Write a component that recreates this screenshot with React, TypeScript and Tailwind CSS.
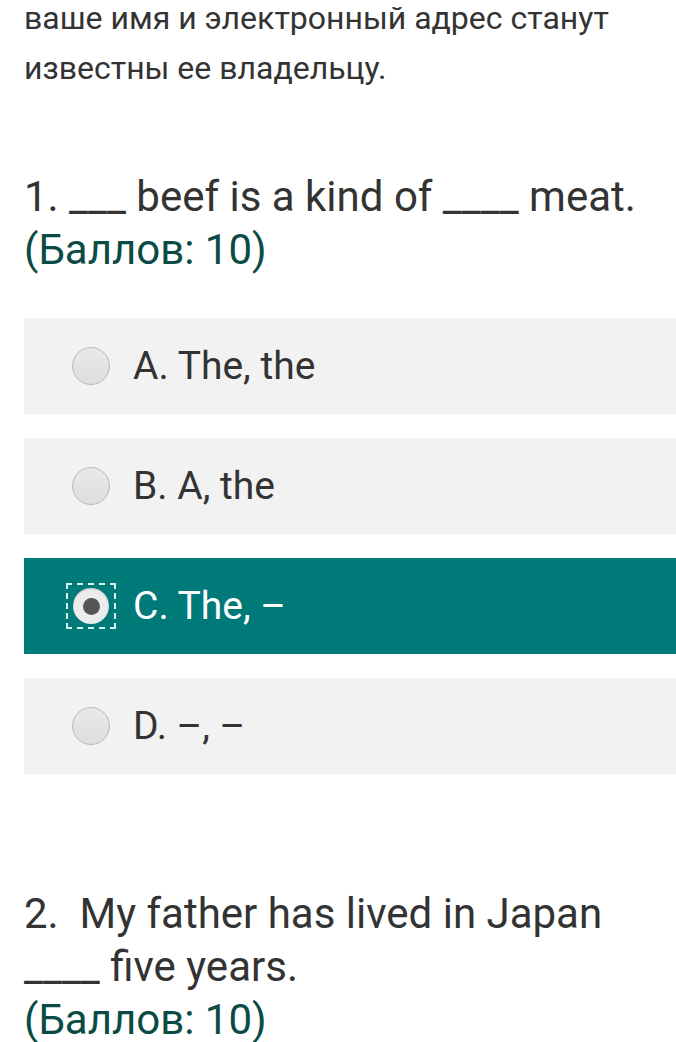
import React from "react";

function Radio({ checked }: { checked?: boolean }) {
  if (checked) {
    return (
      <div className="flex h-[46px] w-[50px] items-center justify-center border-2 border-dashed border-[#d8f0ee]">
        <div className="flex h-[36px] w-[36px] items-center justify-center rounded-full bg-[#ececec] shadow-[inset_0_1px_2px_rgba(0,0,0,0.15)]">
          <div className="h-[17px] w-[17px] rounded-full bg-[#555]" />
        </div>
      </div>
    );
  }
  return (
    <div className="flex h-[46px] w-[50px] items-center justify-center">
      <div className="h-[38px] w-[38px] rounded-full border border-[#b9b9b9] bg-gradient-to-b from-[#e9e9e9] to-[#dedede]" />
    </div>
  );
}

function Option({ label, checked }: { label: string; checked?: boolean }) {
  return (
    <div
      className={
        "flex h-[96px] items-center pl-[42px] " +
        (checked ? "bg-[#007979] text-white" : "bg-[#f2f2f2] text-[#333333]")
      }
    >
      <Radio checked={checked} />
      <span className="ml-[17px] text-[39px] leading-none">{label}</span>
    </div>
  );
}

export default function App() {
  return (
    <div
      className="min-h-[1042px] bg-white pl-6 text-[#333333]"
      style={{ fontFamily: "Roboto, 'Noto Sans', sans-serif" }}
    >
      <p className="mt-[-7px] pr-6 text-[32px] leading-[50px]">
        ваше имя и электронный адрес станут известны ее владельцу.
      </p>
      <div className="mt-[77px] text-[42px] leading-[53px]">
        <div>1. ___ beef is a kind of ____ meat.</div>
        <div className="text-[#0b4b45]">(Баллов: 10)</div>
      </div>
      <div className="mt-[42px] flex flex-col gap-[24px]">
        <Option label="A. The, the" />
        <Option label="B. A, the" />
        <Option label="C. The, –" checked />
        <Option label="D. –, –" />
      </div>
      <div className="mt-[113px] pr-6 text-[42px] leading-[53px]">
        <div>2.&nbsp; My father has lived in Japan ____ five years.</div>
        <div className="text-[#0b4b45]">(Баллов: 10)</div>
      </div>
    </div>
  );
}
